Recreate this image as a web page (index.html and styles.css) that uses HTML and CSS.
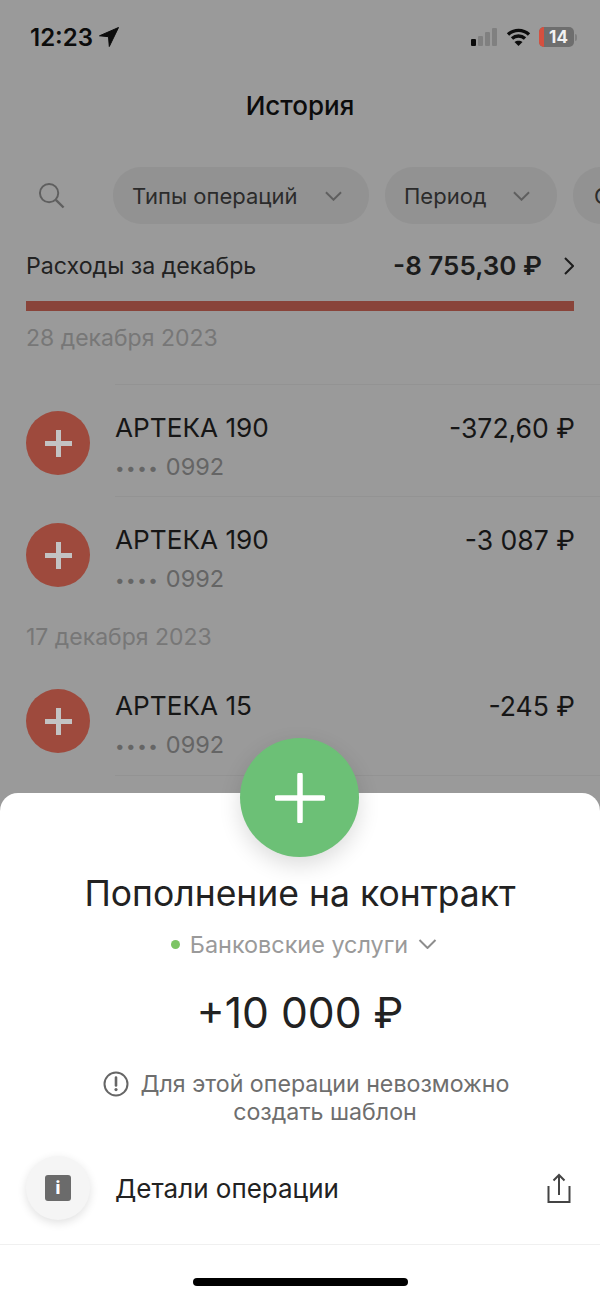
FILE: index.html
```html
<!DOCTYPE html>
<html lang="ru">
<head>
    <meta charset="utf-8">
    <title>История</title>
    <link rel="stylesheet" href="styles.css">
</head>
<body>
    <div class="screen">
        <header class="status-bar">
            <div class="status-time">
                <span>12:23</span>
                <svg class="icon-location" viewBox="0 0 20 20"><path d="M19.500.500.500 8.800l9 .9.800 9.800z" fill="#0c0c0c" stroke="#0c0c0c" stroke-linejoin="round"/></svg>
            </div>
            <div class="status-icons">
                <div class="signal">
                    <span class="signal-bar s1"></span>
                    <span class="signal-bar s2"></span>
                    <span class="signal-bar s3"></span>
                    <span class="signal-bar s4"></span>
                </div>
                <svg class="icon-wifi" viewBox="0 0 24 18" fill="none" stroke="#0c0c0c" stroke-width="3.400">
                    <path d="M1.500 6.500C7.500 1 16.500 1 22.500 6.500"/>
                    <path d="M5.500 10.500c3.700-3.300 9.300-3.300 13 0"/>
                    <path d="M12 18 8 14c2.200-1.800 5.800-1.800 8 0z" fill="#0c0c0c" stroke="none"/>
                </svg>
                <div class="battery"><span class="battery-low"></span><span class="battery-num">14</span></div>
                <span class="battery-cap"></span>
            </div>
        </header>

        <h1 class="page-title">История</h1>

        <div class="filters">
            <svg class="icon-search" viewBox="0 0 28 28" fill="none" stroke="#5f5f5f" stroke-width="2">
                <circle cx="11.500" cy="11.500" r="9.500"/>
                <path d="m18.500 18.500 8 8" stroke-width="2.400"/>
            </svg>
            <div class="chip chip-types">Типы операций
                <svg class="chevron" viewBox="0 0 18 10"><path d="m1 1 8 8 8-8"/></svg>
            </div>
            <div class="chip chip-period">Период
                <svg class="chevron" viewBox="0 0 18 10"><path d="m1 1 8 8 8-8"/></svg>
            </div>
            <div class="chip chip-more">Счета</div>
        </div>

        <div class="spending">
            <span class="spending-label">Расходы за декабрь</span>
            <span class="spending-sum">-8 755,30 ₽</span>
            <svg class="icon-next" viewBox="0 0 10 18"><path d="m1 1 8 8-8 8"/></svg>
        </div>
        <div class="spending-bar"></div>

        <section class="day">
            <div class="day-title">28 декабря 2023</div>
            <div class="operation">
                <div class="op-icon"><span class="plus"></span></div>
                <div class="op-body">
                    <div class="op-name">АРТЕКА 190</div>
                    <div class="op-card"><span class="dots">••••</span> 0992</div>
                </div>
                <div class="op-sum">-372,60 ₽</div>
            </div>
            <div class="operation">
                <div class="op-icon"><span class="plus"></span></div>
                <div class="op-body">
                    <div class="op-name">АРТЕКА 190</div>
                    <div class="op-card"><span class="dots">••••</span> 0992</div>
                </div>
                <div class="op-sum">-3 087 ₽</div>
            </div>
        </section>

        <section class="day day-next">
            <div class="day-title">17 декабря 2023</div>
            <div class="operation no-line">
                <div class="op-icon"><span class="plus"></span></div>
                <div class="op-body">
                    <div class="op-name">АРТЕКА 15</div>
                    <div class="op-card"><span class="dots">••••</span> 0992</div>
                </div>
                <div class="op-sum">-245 ₽</div>
            </div>
        </section>

        <div class="sheet">
            <div class="sheet-badge">
                <svg viewBox="0 0 50 50"><path d="M25 2v46M2 25h46" stroke="#fff" stroke-width="5.500" stroke-linecap="round"/></svg>
            </div>
            <h2 class="sheet-title">Пополнение на контракт</h2>
            <div class="sheet-category">
                <span class="green-dot"></span>
                Банковские услуги
                <svg class="chevron" viewBox="0 0 18 10"><path d="m1 1 8 8 8-8"/></svg>
            </div>
            <div class="sheet-amount">+10 000 ₽</div>
            <div class="sheet-note">
                <div class="note-line">
                    <svg class="icon-warn" viewBox="0 0 26 26">
                        <circle cx="13" cy="13" r="11.500" fill="none" stroke="#666" stroke-width="2"/>
                        <path d="M13 6.500v8" stroke="#666" stroke-width="2.600" stroke-linecap="round"/>
                        <circle cx="13" cy="18.600" r="1.600" fill="#666"/>
                    </svg>
                    Для этой операции невозможно
                </div>
                <div class="note-line second">создать шаблон</div>
            </div>
            <div class="details">
                <div class="details-icon"><span class="info-square">i</span></div>
                <div class="details-text">Детали операции</div>
                <svg class="icon-share" viewBox="0 0 23 30" fill="none" stroke="#444" stroke-width="2">
                    <path d="M1 13v16h21V13"/>
                    <path d="M11.500 22V2M6 7.500 11.500 2 17 7.500"/>
                </svg>
            </div>
            <div class="home-indicator"></div>
        </div>
    </div>
</body>
</html>
```

FILE: styles.css
```css
:root {
    --dim-bg: #9a9a9a;
    --dim-chip: #929292;
    --dim-line: #939393;
    --dim-red: #9e4a3d;
    --text: #222;
}

* {
    box-sizing: border-box;
}

html, body {
    margin: 0;
    padding: 0;
}

body {
    font-family: Inter, "Liberation Sans", sans-serif;
    color: var(--text);
}

.screen {
    position: relative;
    width: 600px;
    height: 1298px;
    overflow: hidden;
    background: var(--dim-bg);
    color: #111;
}

.status-bar {
    height: 74px;
    padding: 0 23px 0 30px;
    display: flex;
    justify-content: space-between;
    align-items: center;
}

.status-time {
    display: flex;
    align-items: center;
    gap: 6px;
    font-size: 24px;
    font-weight: 600;
    color: #0c0c0c;
}

.icon-location {
    width: 20px;
    height: 20px;
}

.status-icons {
    display: flex;
    align-items: center;
}

.signal {
    display: flex;
    align-items: flex-end;
    gap: 2px;
    height: 18px;
    margin-right: 9px;
}

.signal-bar {
    width: 5px;
    border-radius: 1px;
    background: #808080;
}

.s1 { height: 7px; background: #0c0c0c; }
.s2 { height: 10px; }
.s3 { height: 14px; }
.s4 { height: 18px; }

.icon-wifi {
    width: 25px;
    height: 18px;
    margin-right: 8px;
}

.battery {
    position: relative;
    width: 35px;
    height: 20px;
    border-radius: 5px;
    background: #6e6e6e;
    overflow: hidden;
    display: flex;
    align-items: center;
    justify-content: center;
}

.battery-low {
    position: absolute;
    left: 0;
    top: 0;
    bottom: 0;
    width: 5px;
    background: #d6503f;
}

.battery-num {
    padding-left: 4px;
    font-size: 17px;
    font-weight: 700;
    color: #f2f2f2;
}

.battery-cap {
    width: 2px;
    height: 7px;
    margin-left: 1px;
    border-radius: 0 2px 2px 0;
    background: #808080;
}

.page-title {
    margin: 0;
    height: 64px;
    line-height: 64px;
    text-align: center;
    font-size: 26px;
    font-weight: 500;
    color: #0c0c0c;
}

.filters {
    margin-top: 29px;
    height: 57px;
    display: flex;
    align-items: center;
    gap: 16px;
    white-space: nowrap;
}

.icon-search {
    width: 27px;
    height: 27px;
    margin-left: 38px;
    margin-right: 32px;
    flex: none;
}

.chip {
    flex: none;
    height: 57px;
    border-radius: 28px;
    background: var(--dim-chip);
    display: flex;
    align-items: center;
    justify-content: space-between;
    font-size: 22px;
    color: #2b2b2b;
}

.chip-types {
    width: 256px;
    padding: 0 27px 0 19px;
}

.chip-period {
    width: 172px;
    padding: 0 27px 0 19px;
}

.chip-more {
    width: 120px;
    padding-left: 21px;
}

.chevron {
    width: 17px;
    height: 10px;
    fill: none;
    stroke: #5f5f5f;
    stroke-width: 2;
}

.spending {
    margin-top: 19px;
    height: 45px;
    padding: 0 26px;
    display: flex;
    align-items: center;
}

.spending-label {
    flex: 1;
    font-size: 23.200px;
    color: #222;
}

.spending-sum {
    font-size: 26px;
    font-weight: 600;
    color: #1c1c1c;
}

.icon-next {
    width: 10px;
    height: 18px;
    margin-left: 22px;
    fill: none;
    stroke: #1c1c1c;
    stroke-width: 2;
}

.spending-bar {
    margin: 13px 26px 0;
    height: 10px;
    background: #89443a;
}

.day-title {
    padding: 0 26px;
    height: 54px;
    line-height: 54px;
    font-size: 23px;
    color: #777;
}

.day .day-title {
    margin-bottom: 19px;
}

.day-next .day-title {
    margin-bottom: 0;
    line-height: 58px;
}

.operation {
    position: relative;
    height: 112px;
    padding: 27px 25px 0 26px;
    display: flex;
    align-items: flex-start;
}

.operation::before {
    content: "";
    position: absolute;
    left: 115px;
    right: 0;
    top: 0;
    height: 1px;
    background: var(--dim-line);
}

.operation.no-line {
    height: 114px;
}

.operation.no-line::before {
    top: auto;
    bottom: 0;
}

.op-icon {
    flex: none;
    width: 64px;
    height: 64px;
    border-radius: 50%;
    background: var(--dim-red);
    display: flex;
    align-items: center;
    justify-content: center;
}

.plus {
    position: relative;
    display: block;
    width: 27px;
    height: 27px;
}

.plus::before,
.plus::after {
    content: "";
    position: absolute;
    background: #c3c3c3;
}

.plus::before {
    left: 0;
    right: 0;
    top: 11px;
    height: 5px;
}

.plus::after {
    top: 0;
    bottom: 0;
    left: 11px;
    width: 5px;
}

.op-body {
    flex: 1;
    margin-left: 25px;
    margin-top: -1px;
}

.op-name {
    height: 36px;
    line-height: 36px;
    font-size: 26.200px;
    color: #161616;
}

.op-card {
    margin-top: 3px;
    height: 36px;
    line-height: 36px;
    font-size: 23.500px;
    color: #656565;
}

.dots {
    font-size: 17px;
    letter-spacing: 1.500px;
    vertical-align: 1px;
}

.op-sum {
    margin-top: -1px;
    height: 36px;
    line-height: 36px;
    font-size: 26.600px;
    color: #161616;
}

.sheet {
    position: absolute;
    left: 0;
    right: 0;
    top: 793px;
    bottom: 0;
    background: #fff;
    border-radius: 18px 18px 0 0;
    color: var(--text);
    text-align: center;
}

.sheet-badge {
    position: absolute;
    left: 240px;
    top: -55px;
    width: 119px;
    height: 119px;
    border-radius: 50%;
    background: #6cc076;
    box-shadow: 0 8px 22px rgba(0, 0, 0, 0.14);
    display: flex;
    align-items: center;
    justify-content: center;
}

.sheet-badge svg {
    width: 50px;
    height: 50px;
}

.sheet-title {
    margin: 0;
    padding-top: 77px;
    line-height: 48px;
    font-size: 35.500px;
    font-weight: 400;
}

.sheet-category {
    margin-top: 6px;
    height: 40px;
    padding-left: 8px;
    display: flex;
    align-items: center;
    justify-content: center;
    gap: 10px;
    font-size: 23.400px;
    color: #9a9a9a;
}

.sheet-category .chevron {
    width: 19px;
    stroke: #8d8d8d;
}

.green-dot {
    width: 9px;
    height: 9px;
    border-radius: 50%;
    background: #7cc464;
}

.sheet-amount {
    margin-top: 21px;
    height: 56px;
    line-height: 56px;
    font-size: 42.600px;
}

.sheet-note {
    margin-top: 29px;
    font-size: 23.200px;
    line-height: 28px;
    color: #6e6e6e;
}

.note-line {
    padding-left: 12px;
    display: flex;
    align-items: center;
    justify-content: center;
    gap: 12px;
}

.note-line.second {
    padding-left: 50px;
}

.icon-warn {
    width: 26px;
    height: 26px;
}

.details {
    position: relative;
    margin-top: 30px;
    height: 89px;
    padding: 0 29px 24px 26px;
    display: flex;
    align-items: center;
    border-bottom: 1px solid #f0f0f0;
}

.details-icon {
    flex: none;
    width: 64px;
    height: 64px;
    border-radius: 50%;
    background: #f5f5f5;
    box-shadow: 0 3px 10px rgba(0, 0, 0, 0.12);
    display: flex;
    align-items: center;
    justify-content: center;
}

.info-square {
    width: 26px;
    height: 26px;
    border-radius: 3px;
    background: #6b6b6b;
    color: #fff;
    font-size: 17px;
    font-weight: 800;
    line-height: 26px;
}

.details-text {
    flex: 1;
    margin-left: 25px;
    text-align: left;
    font-size: 26px;
}

.icon-share {
    width: 24px;
    height: 30px;
}

.home-indicator {
    position: absolute;
    left: 193px;
    top: 485px;
    width: 215px;
    height: 8px;
    border-radius: 4px;
    background: #000;
}
```
